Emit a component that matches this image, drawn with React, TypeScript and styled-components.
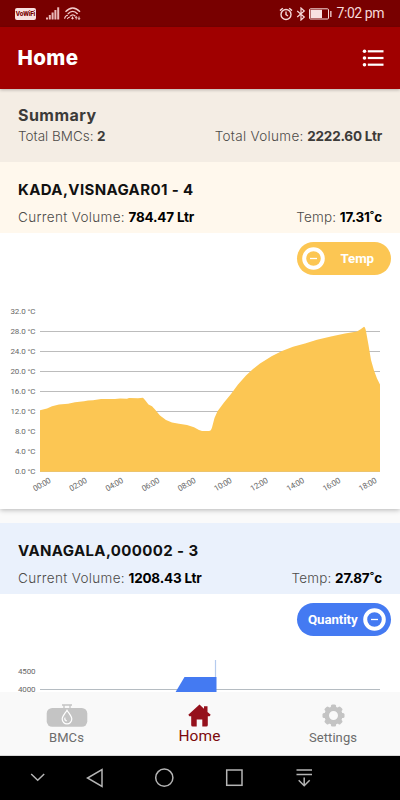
import React from 'react';
import styled, { createGlobalStyle, css } from 'styled-components';

const GlobalStyle = createGlobalStyle`
  * { box-sizing: border-box; }
  body { margin: 0; background: #fff; font-family: Inter, sans-serif; }
  svg { display: block; }
`;

const Screen = styled.div`
  width: 400px;
  height: 800px;
  display: flex;
  flex-direction: column;
  overflow: hidden;
  background: #fafafa;
`;

const StatusBar = styled.header`
  flex: 0 0 27px;
  display: flex;
  align-items: center;
  justify-content: space-between;
  padding: 0 16px 0 15px;
  background: #780000;
  color: #f6d9d9;
`;

const StatusGroup = styled.div<{ $gap: number }>`
  display: flex;
  align-items: center;
  gap: ${(p) => p.$gap}px;
`;

const VoWifi = styled.span`
  width: 21px;
  height: 12px;
  margin-right: 6px;
  border-radius: 2px;
  background: #f8e0e0;
  color: #780000;
  font: 800 6.5px/12px Roboto, sans-serif;
  letter-spacing: -0.2px;
  text-align: center;
`;

const Clock = styled.span`
  margin-left: 2px;
  font: 400 14px/27px Roboto, sans-serif;
  letter-spacing: -0.45px;
  white-space: nowrap;
`;

const AppBar = styled.div`
  flex: 0 0 62px;
  display: flex;
  align-items: center;
  justify-content: space-between;
  padding: 0 16px 0 17.5px;
  background: #a00000;
  color: #fff;
  box-shadow: 0 1px 3px rgba(0, 0, 0, 0.25);
  z-index: 1;
`;

const Title = styled.h1`
  margin: 0;
  font-size: 20.5px;
  font-weight: 800;
  line-height: 24px;
  letter-spacing: 0.4px;
`;

const Summary = styled.section`
  flex: 0 0 73px;
  padding: 17px 18px 0;
  background: #f4ede4;
  color: #3c3b39;
`;

const SummaryTitle = styled.h2`
  margin: 0 0 2px;
  font-size: 16px;
  font-weight: 700;
  line-height: 18px;
  letter-spacing: 0.45px;
`;

const StatRow = styled.div`
  display: flex;
  justify-content: space-between;
  line-height: 20px;
`;

const Stat = styled.div`
  display: flex;
  gap: 3.5px;
  font-size: 13.5px;
  white-space: nowrap;
`;

const Label = styled.span<{ $spacing: number }>`
  font-weight: 300;
  color: #4d4b49;
  letter-spacing: ${(p) => p.$spacing}px;
`;

const Value = styled.span`
  font-weight: 700;
  letter-spacing: -0.2px;
`;

const Card = styled.section<{ $height: number }>`
  flex: 0 0 ${(p) => p.$height}px;
  display: flex;
  flex-direction: column;
  background: #fff;
`;

const RaisedCard = styled(Card)`
  margin-bottom: 14px;
  box-shadow: 0 1px 5px rgba(0, 0, 0, 0.28);
  clip-path: inset(0 0 -8px 0);
`;

const CardHeader = styled.div<{ $tone: string }>`
  flex: 0 0 71px;
  padding: 17px 18px 0;
  background: ${(p) => p.$tone};
  color: #000;
`;

const CardTitle = styled.h3`
  margin: 0 0 6px;
  font-size: 15px;
  font-weight: 700;
  line-height: 22px;
  letter-spacing: 0.38px;
  color: #111;
  white-space: nowrap;
`;

const Toolbar = styled.div`
  flex: 0 0 51px;
  display: flex;
  justify-content: flex-end;
  padding: 9px 9px 0 0;
`;

const Pill = styled.button<{ $color: string; $reverse?: boolean }>`
  display: flex;
  align-items: center;
  justify-content: space-between;
  width: 94px;
  height: 33px;
  border: 0;
  border-radius: 17px;
  background: ${(p) => p.$color};
  color: #fff;
  font: 700 13.3px/33px Roboto, sans-serif;
  letter-spacing: -0.1px;
  ${(p) =>
    p.$reverse
      ? css`padding: 0 5px 0 11px;`
      : css`flex-direction: row-reverse; padding: 0 17px 0 5px;`}
`;

const AxisText = styled.text`
  font: 400 8px Roboto, sans-serif;
  fill: #686868;
`;

const TabBar = styled.nav`
  flex: 0 0 64px;
  display: grid;
  grid-template-columns: 133px 133px 134px;
  background: #f9f9f9;
  border-bottom: 1px solid #d8d8d8;
`;

const Tab = styled.div<{ $active?: boolean }>`
  display: flex;
  flex-direction: column;
  align-items: center;
  padding-top: 12px;
  color: ${(p) => (p.$active ? '#95111c' : '#c4c4c4')};
`;

const TabLabel = styled.span<{ $active?: boolean }>`
  font-family: Roboto, sans-serif;
  font-size: ${(p) => (p.$active ? 15.5 : 13)}px;
  line-height: 18px;
  margin-top: ${(p) => (p.$active ? 0 : 1.5)}px;
  letter-spacing: 0.08px;
  color: ${(p) => (p.$active ? '#7c0a0d' : '#6c6c6c')};
`;

const SystemNav = styled.footer`
  flex: 0 0 44px;
  background: #000;
`;

const SignalIcon = () => (
  <svg width="14" height="13" viewBox="0 0 14 13" fill="#ecb9b9">
    <rect x="0" y="10.500" width="2" height="2" />
    <rect x="2.800" y="8" width="2" height="4.500" />
    <rect x="5.600" y="5.500" width="2" height="7" />
    <rect x="8.400" y="3" width="2" height="9.500" />
    <rect x="11.200" y="0.300" width="2" height="12.200" />
  </svg>
);

const WifiIcon = () => (
  <svg width="17" height="13" viewBox="0 0 17 13" fill="none" stroke="#f3cccc" strokeWidth="1.400">
    <path d="M1.500 4.800Q8.800-2.800 16 4.800M3.800 7Q8.800 1.800 13.600 7M6.300 9.200Q8.800 6.600 11.300 9.200" />
    <path d="M.6 11.700Q1 8.600 4 8.300M3.300 12Q4 10.300 6 10" strokeWidth="1.100" />
    <path d="M8.500 9.600v2.800M7.200 11.300h2.600M12.200 9.500v3M15 9.500v3M11.200 10.800l1-1.200 1 1.200M14 11.200l1 1.200 1-1.200" strokeWidth="1" />
  </svg>
);

const AlarmIcon = () => (
  <svg width="14" height="14" viewBox="0 0 14 14" fill="none" stroke="currentColor" strokeWidth="1.400">
    <circle cx="7" cy="7.500" r="5" />
    <path d="M7 4.500v3.200l2 1.300M1 3.600 3.800 1.200M13 3.600 10.200 1.200" />
  </svg>
);

const BluetoothIcon = () => (
  <svg width="10" height="14" viewBox="0 0 10 14" fill="none" stroke="currentColor" strokeWidth="1.200">
    <path d="M1.200 4 8.300 10 5 13V1l3.300 3-7.100 6" />
  </svg>
);

const BatteryIcon = () => (
  <svg width="23" height="12" viewBox="0 0 23 12">
    <rect x=".5" y=".8" width="19" height="10.200" rx="1" fill="none" stroke="currentColor" />
    <rect x="1.500" y="1.800" width="11.500" height="8.200" fill="#f8e0e0" />
    <rect x="21.200" y="3" width="1.300" height="6" fill="currentColor" />
  </svg>
);

const ListIcon = () => (
  <svg width="22" height="18" viewBox="0 0 22 18" fill="#fff">
    {[2.3, 9, 15.7].map((y) => (
      <g key={y}>
        <circle cx="2.500" cy={y} r="1.800" />
        <rect x="5.800" y={y - 1.1} width="15.700" height="2.200" />
      </g>
    ))}
  </svg>
);

const MinusRing = () => (
  <svg width="23" height="23" viewBox="0 0 23 23" fill="none" stroke="#fff">
    <circle cx="11.500" cy="11.500" r="9.300" strokeWidth="4" />
    <path d="M8 11.500h7" strokeWidth="1.300" />
  </svg>
);

const TankIcon = () => (
  <svg width="42" height="23" viewBox="0 0 42 23">
    <path d="M16 1h10M18 1v4M24 1v4" stroke="currentColor" strokeWidth="1.300" fill="none" />
    <rect x=".7" y="4" width="40.600" height="18.800" rx="5.500" fill="currentColor" />
    <path d="M21 6.200c-2 3.300-4.800 6.300-4.800 8.900a4.800 4.800 0 0 0 9.600 0c0-2.600-2.800-5.600-4.800-8.900Z" fill="none" stroke="#fff" strokeWidth="1.200" />
    <path d="M19 13.500c-1.300 2 .1 4.300 2 3.400-1.300-.7-1.900-1.700-2-3.400Z" fill="#fff" stroke="#fff" strokeWidth=".5" />
  </svg>
);

const HomeIcon = () => (
  <svg width="23" height="23" viewBox="0 0 23 23" fill="currentColor">
    <path d="M11.500.6 16 4.700V2.300h3.500v5.600l3.200 2.900-1.100 1.500h-1.800v8.800q0 1.500-1.500 1.500h-4v-7H8.700v7h-4q-1.500 0-1.500-1.500v-8.800H1.400L.3 10.800Z" />
  </svg>
);

const GearIcon = () => (
  <svg width="23" height="23" viewBox="0 0 23 23" fill="currentColor">
    {[0, 45, 90, 135, 180, 225, 270, 315].map((angle) => (
      <rect key={angle} x="8.900" y=".5" width="5.200" height="5" rx="1.500" transform={`rotate(${angle} 11.500 11.500)`} />
    ))}
    <circle cx="11.500" cy="11.500" r="6.800" fill="none" stroke="currentColor" strokeWidth="4.600" />
  </svg>
);

const temperatures = [32, 28, 24, 20, 16, 12, 8, 4, 0];
const hours = ['00:00', '02:00', '04:00', '06:00', '08:00', '10:00', '12:00', '14:00', '16:00', '18:00'];

const TemperatureChart = () => (
  <svg width="400" height="225" viewBox="0 284 400 225">
    {temperatures.map((t, i) => (
      <g key={t}>
        {i > 0 && <path d={`M40 ${311.5 + i * 20}H380`} stroke="#bcbcbc" />}
        <AxisText x="35.500" y={313.6 + i * 20.05} textAnchor="end" textLength={t > 9 ? 25 : 20.5}>
          {`${t.toFixed(1)} °C`}
        </AxisText>
      </g>
    ))}
    <path
      fill="#fcc653"
      d="M40 410.300 47 408.500 52 406.200 59 404.500 68 403.700 75 402.200 84 401.200 88 400.500 93 400.200 101 399 115 399 120 398.600 127 398.800 129 398 138 398.200 143 397.700 145 400 148.500 404.500 152 406.300 155 409.500 160 415.500 166 420 172 422.500 179 423.700 187 425.100 194 427.300 199 430 202 431H209Q211 431 212 427.500L214.500 418 217.500 411.300 224 402.500 231 394 238 384.500 246 375.500 253 369 260 363.500 272 356 282 351 293 346.800 305 343.500 317 339.800 332 336.300 345 333.500 357 331.500 361 329 364 326.700Q365.500 327 366.500 334L368.500 345 371 360 374 370.500 377 378.500 380 384.500V471.800H40Z"
    />
    {hours.map((h, i) => (
      <AxisText key={h} textAnchor="end" textLength="19" transform={`translate(${51.5 + i * 36.2} 482) rotate(-30)`}>
        {h}
      </AxisText>
    ))}
  </svg>
);

const QuantityChart = () => (
  <svg width="400" height="47" viewBox="0 645 400 47" overflow="visible">
    <AxisText x="35.500" y="674.300" textAnchor="end" textLength="17.500">4500</AxisText>
    <AxisText x="35.500" y="691.800" textAnchor="end" textLength="17.500">4000</AxisText>
    <path d="M40 689.500H380" stroke="#b5bcc2" />
    <path d="M175 693 184.500 677H216.500V693Z" fill="#447af2" />
    <path d="M215.500 660V677" stroke="#b5cbee" strokeWidth="1.200" />
  </svg>
);

const SystemIcons = () => (
  <svg width="400" height="44" viewBox="0 756 400 44" fill="none" stroke="#b5b5b5" strokeWidth="1.500">
    <path d="m31.200 774 6.500 6.300 6.500-6.300M102 769.500v17l-14.500-8.500Z" />
    <circle cx="164.300" cy="777.700" r="8.600" />
    <rect x="226.700" y="770" width="15.300" height="15.300" />
    <path d="M296.500 770H312M296.500 774.500H312M304.200 777.500v8M298.700 780.200l5.500 5.500 5.500-5.500" />
  </svg>
);

export default function App() {
  return (
    <Screen>
      <GlobalStyle />
      <StatusBar>
        <StatusGroup $gap={4}>
          <VoWifi>VoWiFi</VoWifi>
          <SignalIcon />
          <WifiIcon />
        </StatusGroup>
        <StatusGroup $gap={3}>
          <AlarmIcon />
          <BluetoothIcon />
          <BatteryIcon />
          <Clock>7:02 pm</Clock>
        </StatusGroup>
      </StatusBar>
      <AppBar>
        <Title>Home</Title>
        <ListIcon />
      </AppBar>
      <Summary>
        <SummaryTitle>Summary</SummaryTitle>
        <StatRow>
          <Stat><Label $spacing={0}>Total BMCs:</Label><Value>2</Value></Stat>
          <Stat><Label $spacing={0.32}>Total Volume:</Label><Value>2222.60 Ltr</Value></Stat>
        </StatRow>
      </Summary>
      <RaisedCard $height={347}>
        <CardHeader $tone="#fff8ed">
          <CardTitle>KADA,VISNAGAR01 - 4</CardTitle>
          <StatRow>
            <Stat><Label $spacing={0.34}>Current Volume:</Label><Value>784.47 Ltr</Value></Stat>
            <Stat><Label $spacing={0.2}>Temp:</Label><Value>17.31˚c</Value></Stat>
          </StatRow>
        </CardHeader>
        <Toolbar>
          <Pill $color="#fcc653"><span>Temp</span><MinusRing /></Pill>
        </Toolbar>
        <TemperatureChart />
      </RaisedCard>
      <Card $height={169}>
        <CardHeader $tone="#eaf1fc">
          <CardTitle>VANAGALA,000002 - 3</CardTitle>
          <StatRow>
            <Stat><Label $spacing={0.34}>Current Volume:</Label><Value>1208.43 Ltr</Value></Stat>
            <Stat><Label $spacing={0.2}>Temp:</Label><Value>27.87˚c</Value></Stat>
          </StatRow>
        </CardHeader>
        <Toolbar>
          <Pill $color="#447af2" $reverse><span>Quantity</span><MinusRing /></Pill>
        </Toolbar>
        <QuantityChart />
      </Card>
      <TabBar>
        <Tab><TankIcon /><TabLabel>BMCs</TabLabel></Tab>
        <Tab $active><HomeIcon /><TabLabel $active>Home</TabLabel></Tab>
        <Tab><GearIcon /><TabLabel>Settings</TabLabel></Tab>
      </TabBar>
      <SystemNav><SystemIcons /></SystemNav>
    </Screen>
  );
}
